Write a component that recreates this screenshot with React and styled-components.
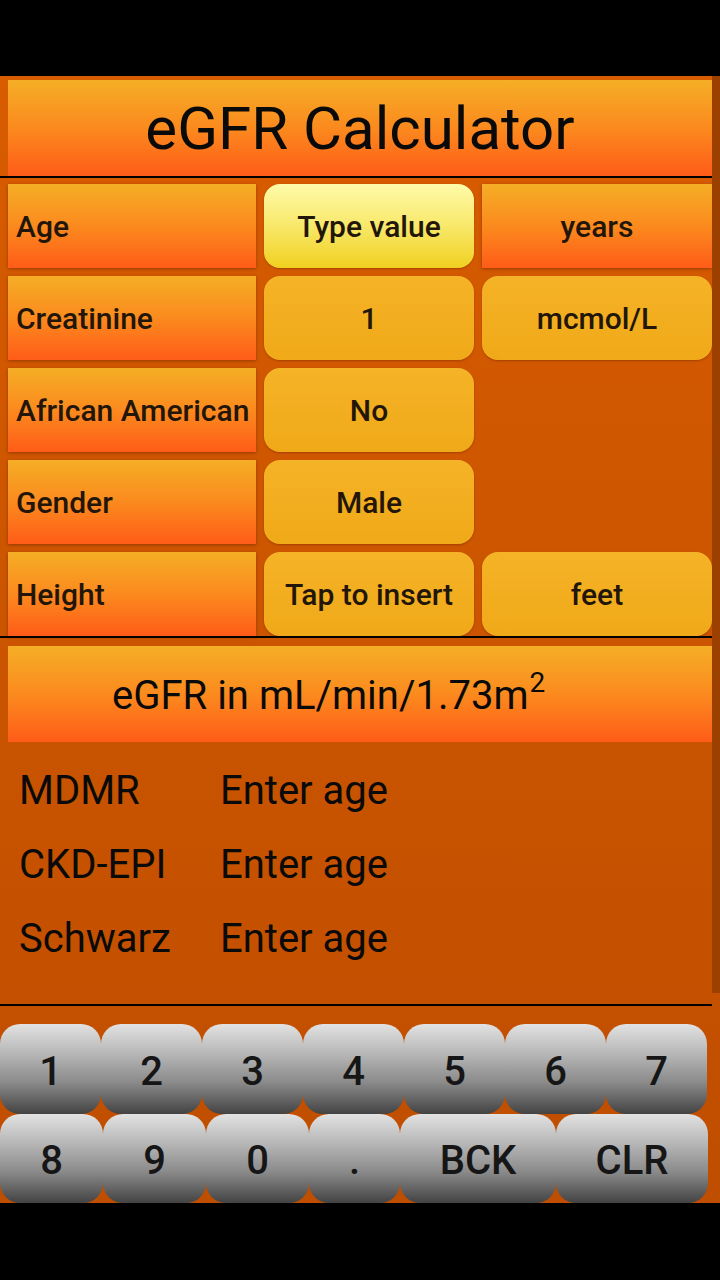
import React from "react";
import styled, { createGlobalStyle, css } from "styled-components";

const Global = createGlobalStyle`
  html, body { margin: 0; padding: 0; background: #000; }
  body { font-family: Roboto, "Noto Sans", "Liberation Sans", sans-serif; }
  * { box-sizing: border-box; }
`;

const Screen = styled.div`
  width: 720px;
  height: 1280px;
  display: flex;
  flex-direction: column;
  background: #000;
  overflow: hidden;
`;

const StatusBar = styled.div`
  height: 76px;
  flex: none;
  background: #000;
`;

const Body = styled.div`
  flex: 1;
  display: flex;
  flex-direction: column;
  background: linear-gradient(#d85c00 0%, #c85300 60%, #c04e00 100%);
`;

const ScrollArea = styled.div`
  display: flex;
  flex-direction: row;
`;

const Content = styled.div`
  width: 712px;
  display: flex;
  flex-direction: column;
  padding-top: 4px;
`;

const ScrollTrack = styled.div`
  width: 8px;
  height: 917px;
  background: #9c4000;
`;

const Divider = styled.div`
  height: 2px;
  width: 712px;
  background: #000;
  flex: none;
`;

const orangeGrad = css`
  background: linear-gradient(#f5ae26 0%, #fb8a1e 50%, #ff5c18 100%);
  box-shadow: 0 1px 3px rgba(80, 20, 0, 0.45);
`;

const Title = styled.div`
  margin-left: 8px;
  height: 96px;
  ${orangeGrad};
  box-shadow: none;
  display: flex;
  align-items: center;
  justify-content: center;
  font-size: 60px;
  color: #0a0a0a;
`;

const FormGrid = styled.div`
  display: grid;
  grid-template-columns: 248px 210px 230px;
  grid-auto-rows: 84px;
  column-gap: 8px;
  row-gap: 8px;
  padding: 6px 0 0 8px;
`;

const cellText = css`
  font-size: 30px;
  font-weight: 500;
  color: #22160a;
  display: flex;
  align-items: center;
`;

const Label = styled.div`
  ${orangeGrad};
  ${cellText};
  padding-left: 8px;
  white-space: nowrap;
`;

const Unit = styled.div`
  ${orangeGrad};
  ${cellText};
  justify-content: center;
`;

const Field = styled.div`
  ${cellText};
  justify-content: center;
  border-radius: 16px;
  white-space: nowrap;
  background: ${(p) =>
    p.$active
      ? "linear-gradient(#fffba9 0%, #f8e86a 50%, #f0d020 100%)"
      : "linear-gradient(#f5b327 0%, #f0a918 100%)"};
  box-shadow: 0 1px 2px rgba(80, 20, 0, 0.35);
`;

const ResultHeader = styled.div`
  margin: 8px 0 0 8px;
  height: 96px;
  ${orangeGrad};
  box-shadow: none;
  display: flex;
  align-items: center;
  padding-left: 104px;
  font-size: 40px;
  color: #0a0a0a;
  padding-top: 2px;

  sup {
    font-size: 28px;
    line-height: 0;
    position: relative;
    top: -2px;
    margin-left: 1px;
  }
`;

const Results = styled.div`
  display: grid;
  grid-template-columns: 201px 1fr;
  grid-auto-rows: 74px;
  padding: 12px 0 28px 19px;
  font-size: 40px;
  line-height: 74px;
  color: #0a0a0a;
`;

const Keypad = styled.div`
  display: flex;
  flex-direction: column;
  padding-top: 18px;
  width: 708px;
`;

const KeyRow = styled.div`
  display: flex;
  height: ${(p) => p.$h}px;
`;

const Key = styled.div`
  width: ${(p) => p.$w}px;
  flex: none;
  height: 100%;
  border-radius: 20px;
  background: linear-gradient(#e2e2e2 0%, #b4b4b4 35%, #8a8a8a 65%, #434343 100%);
  display: flex;
  align-items: center;
  justify-content: center;
  font-size: 40px;
  font-weight: 500;
  color: #161616;
  padding-top: 4px;
`;

const BottomBar = styled.div`
  height: 77px;
  flex: none;
  background: #000;
`;

const row1 = [
  ["1", 101], ["2", 101], ["3", 101], ["4", 101], ["5", 101], ["6", 101], ["7", 101],
];
const row2 = [
  ["8", 103], ["9", 103], ["0", 103], [".", 91], ["BCK", 156], ["CLR", 152],
];

export default function App() {
  return (
    <>
      <Global />
      <Screen>
        <StatusBar />
        <Body>
          <ScrollArea>
            <Content>
              <Title>eGFR Calculator</Title>
              <Divider />
              <FormGrid>
                <Label>Age</Label>
                <Field $active>Type value</Field>
                <Unit>years</Unit>

                <Label>Creatinine</Label>
                <Field>1</Field>
                <Field>mcmol/L</Field>

                <Label>African American</Label>
                <Field>No</Field>
                <div />

                <Label>Gender</Label>
                <Field>Male</Field>
                <div />

                <Label>Height</Label>
                <Field>Tap to insert</Field>
                <Field>feet</Field>
              </FormGrid>
              <Divider />
              <ResultHeader>
                <span>
                  eGFR in mL/min/1.73m<sup>2</sup>
                </span>
              </ResultHeader>
              <Results>
                <span>MDMR</span>
                <span>Enter age</span>
                <span>CKD-EPI</span>
                <span>Enter age</span>
                <span>Schwarz</span>
                <span>Enter age</span>
              </Results>
            </Content>
            <ScrollTrack />
          </ScrollArea>
          <Divider />
          <Keypad>
            <KeyRow $h={90}>
              {row1.map(([k, w]) => (
                <Key key={k} $w={w}>{k}</Key>
              ))}
            </KeyRow>
            <KeyRow $h={89}>
              {row2.map(([k, w]) => (
                <Key key={k} $w={w}>{k}</Key>
              ))}
            </KeyRow>
          </Keypad>
        </Body>
        <BottomBar />
      </Screen>
    </>
  );
}
